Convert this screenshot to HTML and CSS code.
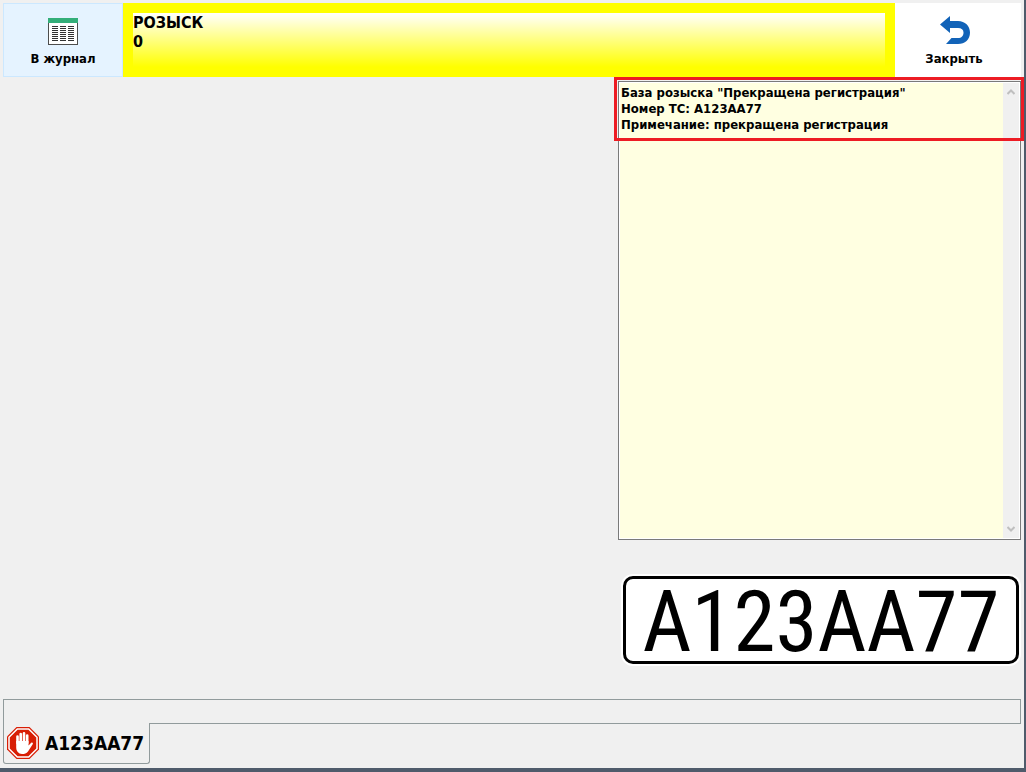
FILE: index.html
```html
<!DOCTYPE html>
<html lang="ru">

<head>
    <meta charset="UTF-8">
    <meta name="viewport" content="width=device-width, initial-scale=1.0">
    <title>Розыск</title>
    <link rel="stylesheet" href="styles.css">
</head>

<body>
    <header class="header">
        <button type="button" class="header-btn journal">
            <svg width="30" height="27" viewBox="0 0 30 27" shape-rendering="crispEdges">
                <path fill="#4d4d4d" d="M0 5h30v22H0z" />
                <path fill="#fff" d="M1 5h28v21H1z" />
                <path fill="#33ae79" d="M0 0h30v5H0z" />
                <path stroke="#333" stroke-dasharray="6 2" d="M4 8.500h22M4 10.500h22M4 12.500h22M4 14.500h22M4 16.500h22M4 18.500h22M4 20.500h22M4 22.500h22" />
            </svg>
            <span>В журнал</span>
        </button>
        <div class="status">
            <div class="status-inner">
                <div>РОЗЫСК</div>
                <div>0</div>
            </div>
        </div>
        <button type="button" class="header-btn close">
            <svg width="32" height="29" viewBox="-2 0 32 29">
                <path fill="#1263b8" d="M0 8.500L10 0V5H18C25 5 30 10 30 16.500C30 23.500 25 28 18 28H6L11.500 22H18C21.500 22 23.500 20 23.500 16.500C23.500 13.500 21.500 12 18 12H10V17Z" />
            </svg>
            <span>Закрыть</span>
        </button>
    </header>

    <main class="content">
        <div class="picture"></div>
        <section class="info">
            <div class="log">
                <textarea class="log-text" aria-label="Информация о розыске" readonly>База розыска "Прекращена регистрация"
Номер ТС: А123АА77
Примечание: прекращена регистрация</textarea>
                <div class="scrollbar">
                    <svg width="8" height="6" viewBox="0 0 8 6">
                        <path fill="none" stroke="#bfbfbf" stroke-width="2" d="M.5 5L4 1.500L7.500 5" />
                    </svg>
                    <svg width="8" height="6" viewBox="0 0 8 6">
                        <path fill="none" stroke="#bfbfbf" stroke-width="2" d="M.5 1L4 4.500L7.500 1" />
                    </svg>
                </div>
                <div class="highlight"></div>
            </div>
            <div class="plate">
                <div class="plate-number">А123АА77</div>
            </div>
        </section>
    </main>

    <footer class="tabs">
        <div class="tabs-line"></div>
        <button type="button" class="tab">
            <svg width="32" height="32" viewBox="0 0 32 32">
                <path fill="#d81e05" d="M9.500 0h13L32 9.500v13L22.500 32h-13L0 22.500v-13z" />
                <path fill="none" stroke="#fff" stroke-width="1.500" d="M10.300 2h11.400L30 10.300v11.400L21.700 30H10.300L2 21.700V10.300z" />
                <path fill="none" stroke="#fff" stroke-width="2.600" stroke-linecap="round" d="M10.500 16V9.500M13.700 15V7M17 15V6.300M20.200 16V8.500" />
                <path fill="#fff" d="M9.200 14H21.500V18.500L24 16C25.200 15 26.500 16 25.700 17.200L21 24.500C19.500 26.500 17.500 27 15 27C11.500 27 9.200 24 9.200 20.500Z" />
            </svg>
            <span>А123АА77</span>
        </button>
    </footer>
</body>

</html>
```
FILE: styles.css
```css
* {
    box-sizing: border-box;
}
body {
    margin: 0;
    min-height: 100vh;
    display: flex;
    flex-direction: column;
    padding: 3px 3px 4px;
    border-right: 2px solid #4f5b6b;
    border-bottom: 4px solid #4f5b6b;
    background-color: #f0f0f0;
    font-family: "DejaVu Sans Condensed", "DejaVu Sans", sans-serif;
    font-weight: bold;
    color: #000;
}
button,
textarea {
    font: inherit;
    color: inherit;
}

/* header */
.header {
    display: flex;
    height: 74px;
}
.header-btn {
    display: flex;
    flex-direction: column;
    align-items: center;
    justify-content: flex-end;
    gap: 6px;
    padding: 0 0 10px;
    border: 0;
    font-size: 13px;
    line-height: 16px;
}
.journal {
    width: 120px;
    padding-bottom: 9px;
    background-color: #e5f3ff;
    border: 1px solid #cce8ff;
}
.close {
    width: 126px;
    padding-right: 8px;
    background-color: #fff;
}
.status {
    flex: 1;
    padding: 10px;
    background-color: #ff0;
}
.status-inner {
    height: 100%;
    background: linear-gradient(#fff, #ff0);
    font-size: 16px;
    line-height: 19px;
}

/* content */
.content {
    flex: 1;
    display: flex;
    padding-top: 4px;
}
.picture {
    flex: 1;
}
.info {
    width: 403px;
    display: flex;
    flex-direction: column;
}
.log {
    position: relative;
    flex: 1;
    display: flex;
    padding: 1px;
    border: 1px solid #7a7a7a;
    background-color: #fff;
}
.log-text {
    flex: 1;
    min-width: 0;
    padding: 2px 1px;
    border: 0;
    outline: 0;
    resize: none;
    overflow: hidden;
    background-color: #ffffe1;
    font-size: 13px;
    line-height: 16px;
}
.scrollbar {
    width: 16px;
    display: flex;
    flex-direction: column;
    align-items: center;
    justify-content: space-between;
    padding: 6px 0;
    background-color: #f0f0f0;
}
/* red frame over the first lines of the log */
.highlight {
    position: absolute;
    top: -5px;
    left: -5px;
    right: -4px;
    height: 64px;
    border: 3px solid #ed1c24;
    pointer-events: none;
}
.plate {
    margin: 34px 0 33px 3px;
    padding: 2px;
    border-radius: 12px;
    background-color: #fff;
}
.plate-number {
    height: 88px;
    border: 3px solid #000;
    border-radius: 10px;
    font-family: "Roboto Condensed", "Liberation Sans Narrow", sans-serif;
    font-size: 85px;
    font-weight: normal;
    line-height: 86px;
    text-align: center;
    white-space: nowrap;
}

/* tabs */
.tabs-line {
    height: 25px;
    border: 1px solid #919b9c;
}
.tab {
    display: flex;
    align-items: center;
    gap: 6px;
    height: 41px;
    margin-top: -1px;
    padding: 0 5px 0 3px;
    border: 1px solid #919b9c;
    border-top: 0;
    border-radius: 0 0 3px 3px;
    background-color: #f0f0f0;
    position: relative;
    font-size: 19px;
}
```
